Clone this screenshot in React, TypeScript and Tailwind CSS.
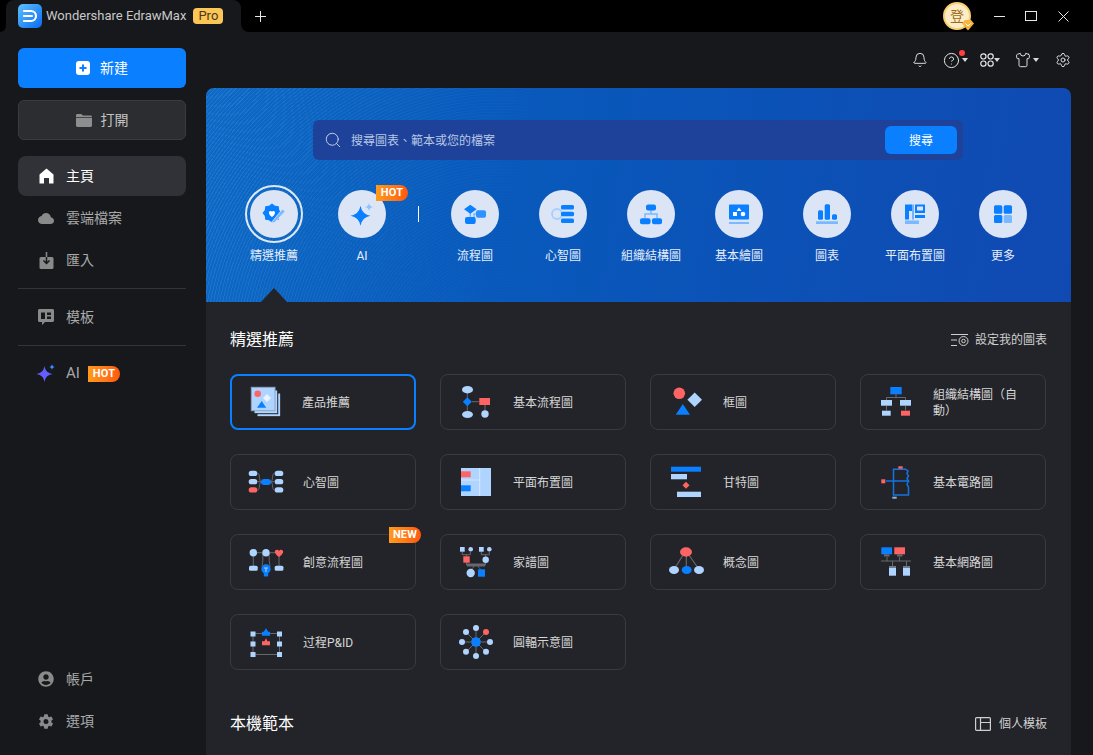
import React from 'react';
import { Bell, CircleHelp, Settings, Shirt, Search } from 'lucide-react';
import { IoCloud, IoSettingsSharp } from 'react-icons/io5';
import { FaUserCircle } from 'react-icons/fa';

const BLUE = '#0a7fff';
const LIGHT = '#afd4ff';
const RED = '#ff6464';
const LINE = '#66686d';

type IconProps = { children: React.ReactNode };

const Icon36: React.FC<IconProps> = ({ children }) => (
  <svg width="36" height="36" viewBox="0 0 36 36" className="shrink-0">{children}</svg>
);

const Icon24: React.FC<IconProps> = ({ children }) => (
  <svg width="24" height="24" viewBox="-12 -12 24 24">{children}</svg>
);

const Caret = () => <span className="border-x-[3px] border-t-[4px] border-x-transparent border-t-[#d8d8d8]" />;

const Tag: React.FC<{ text: string; className: string }> = ({ text, className }) => (
  <span className={`absolute flex h-4 w-8 items-center justify-center rounded-r-full rounded-tl-lg bg-gradient-to-r from-[#ff9a1c] to-[#ff5710] text-[11px] font-bold tracking-[0.2px] text-white ${className}`}>
    {text}
  </span>
);

const categories: { label: string; icon: React.ReactNode }[] = [
  { label: '流程圖', icon: <Icon24><path d="M-4.700-3v7M1 0h-2v6h-4" fill="none" stroke="#7ab8ff" strokeWidth="1.500" /><path d="M-4.700-9.300 1.600-4.800-4.700-.3-11-4.800Z" fill={BLUE} /><rect x="1" y="-3.700" width="10" height="7.400" rx="2" fill="#2f93ff" /><rect x="-10" y="3" width="10.700" height="7" rx="2" fill={BLUE} /></Icon24> },
  { label: '心智圖', icon: <Icon24><circle cx="-6" cy="0" r="5" fill="none" stroke="#a6cfff" strokeWidth="1.800" /><rect x="-2" y="-9" width="13" height="4.500" rx="1.500" fill={BLUE} /><rect x="-2" y="-2.200" width="13" height="4.500" rx="1.500" fill={BLUE} /><rect x="-2" y="4.500" width="13" height="4.500" rx="1.500" fill={BLUE} /></Icon24> },
  { label: '組織結構圖', icon: <Icon24><path d="M0-4v4M-6 4V0H6v4" fill="none" stroke="#7ab8ff" strokeWidth="1.500" /><rect x="-5" y="-9.500" width="10" height="6" rx="2" fill={BLUE} /><rect x="-11" y="4.300" width="10.500" height="6" rx="2" fill={BLUE} /><rect x="1" y="4.300" width="10" height="6" rx="2" fill={BLUE} /></Icon24> },
  { label: '基本繪圖', icon: <Icon24><rect x="-10" y="-9.500" width="20" height="15" rx="1" fill={BLUE} /><rect x="-10" y="8" width="20" height="2" fill="#7ab8ff" /><path d="M0-6.500 2.500-3h-5Z" fill="#fff" /><rect x="-6" y="-2" width="4" height="4" fill="#fff" /><circle cx="4" cy="0" r="2.300" fill="#fff" /></Icon24> },
  { label: '圖表', icon: <Icon24><rect x="-9" y="-3.700" width="5" height="9.400" rx="1.500" fill={BLUE} /><rect x="-2.300" y="-9.700" width="5.300" height="15.400" rx="1.500" fill={BLUE} /><rect x="5" y="0.300" width="5" height="5.400" rx="1.500" fill={BLUE} /><rect x="-11" y="7.300" width="22" height="2.700" fill="#7ab8ff" /></Icon24> },
  { label: '平面布置圖', icon: <Icon24><path d="M-10-9.500H-3V-3H-6V5.500H-10ZM0-9.500H10V-1H0ZM0 1H10V4H0Z" fill={BLUE} /><rect x="-2.500" y="-9.500" width="1" height="15" fill={BLUE} /><rect x="2" y="-7.500" width="6" height="4" fill="#dbe5f6" /><rect x="-10" y="6.500" width="14" height="3.500" fill="#7ab8ff" /></Icon24> },
  { label: '更多', icon: <Icon24><rect x="-9" y="-8.700" width="8.300" height="8.400" rx="1.500" fill={BLUE} /><rect x="0.700" y="-8.700" width="8.300" height="8.400" rx="1.500" fill={BLUE} /><rect x="-9" y="1" width="8.300" height="8" rx="1.500" fill={BLUE} /><rect x="0.700" y="1" width="8.300" height="8" rx="1.500" fill="#7ab8ff" /></Icon24> },
];

const cards: { label: string; icon: React.ReactNode; selected?: boolean; isNew?: boolean }[] = [
  {
    label: '產品推薦', selected: true,
    icon: <Icon36><rect x="9" y="9" width="23.700" height="23.700" fill={LIGHT} stroke="#232429" /><rect x="6" y="6" width="23.700" height="23.700" fill={LIGHT} stroke="#232429" /><rect x="3.300" y="3.300" width="23.700" height="23.400" fill={LIGHT} stroke="#8aa4c2" /><circle cx="9.700" cy="9.700" r="3.300" fill={RED} /><path d="m19 10 4 4-4 4-4-4Z" fill="#eaf4ff" /><path d="m13.700 17 4.500 6.700H9Z" fill={BLUE} /></Icon36>,
  },
  {
    label: '基本流程圖',
    icon: <Icon36><path d="M9.300 9.300V27M14 17.700h7M27 21v6" stroke={LINE} fill="none" /><ellipse cx="9.500" cy="5.700" rx="5.500" ry="3.700" fill={LIGHT} /><path d="M9.300 13.200l4.500 4.500-4.500 4.500-4.500-4.500Z" fill={BLUE} /><rect x="21.300" y="14" width="10.700" height="7" fill={RED} /><ellipse cx="9.500" cy="30.500" rx="5.500" ry="3.500" fill={LIGHT} /><circle cx="27" cy="30" r="3.700" fill={LIGHT} /></Icon36>,
  },
  {
    label: '框圖',
    icon: <Icon36><circle cx="11.300" cy="9.300" r="5.800" fill={RED} /><path d="M26.700 8.400 34 15.700 26.700 23l-7.300-7.300Z" fill={LIGHT} /><path d="M14.800 20 22 30.700H7.700Z" fill={BLUE} /></Icon36>,
  },
  {
    label: '組織結構圖（自動）',
    icon: <Icon36><path d="M18 10v3.500M8.500 16v-2.500h19V16M8.500 22v4.500M27.500 22v4.500" fill="none" stroke={LINE} /><rect x="12.300" y="3" width="11.400" height="7.300" fill={BLUE} /><rect x="3" y="16" width="11" height="5.700" fill={LIGHT} /><rect x="22" y="16" width="11" height="5.700" fill={LIGHT} /><rect x="4" y="26.700" width="8.700" height="5" fill={LIGHT} /><rect x="23" y="26.700" width="9" height="5" fill={RED} /></Icon36>,
  },
  {
    label: '心智圖',
    icon: <Icon36><path d="M9.500 9.300c3 0 1 8.400 4 8.400-3 0-1 8.300-4 8.300M9.500 17.700h4M26.500 9.300c-3 0-1 8.400-4 8.400 3 0 1 8.300 4 8.300M26.500 17.700h-4" fill="none" stroke={LINE} /><rect x="13" y="15" width="10" height="6" rx="3" fill={BLUE} /><rect x="0.700" y="6.700" width="8.600" height="5.300" rx="2.600" fill={LIGHT} /><rect x="0.700" y="15" width="8.600" height="5.300" rx="2.600" fill={LIGHT} /><rect x="0.700" y="23.300" width="8.600" height="5.300" rx="2.600" fill={RED} /><rect x="26.700" y="6.700" width="8.600" height="5.300" rx="2.600" fill={LIGHT} /><rect x="26.700" y="15" width="8.600" height="5.300" rx="2.600" fill={LIGHT} /><rect x="26.700" y="23.300" width="8.600" height="5.300" rx="2.600" fill={LIGHT} /></Icon36>,
  },
  {
    label: '平面布置圖',
    icon: <Icon36><rect x="3" y="4" width="30" height="28" fill={LIGHT} /><path d="M3 16h19M21.700 4v28" stroke="#d5e8ff" fill="none" /><rect x="3" y="7.300" width="9.700" height="6" fill={RED} /><rect x="3" y="21.300" width="9.700" height="6" fill={BLUE} /></Icon36>,
  },
  {
    label: '甘特圖',
    icon: <Icon36><rect x="3" y="2.700" width="30" height="5" fill={BLUE} /><rect x="3" y="10" width="16" height="5.300" fill={LIGHT} /><path d="M18 17.800l3.500 3.500-3.500 3.500-3.500-3.500Z" fill={RED} /><rect x="9" y="27.700" width="24" height="5.300" fill={LIGHT} /></Icon36>,
  },
  {
    label: '基本電路圖',
    icon: <Icon36><path d="M15.500 17V5.200H27.500l2.500 1.800-1 2.500 1.500 2.500-1.500 2.500 1.500 2.500H8M15.500 17V31H30.500V23L29 20.500 30.500 17" fill="none" stroke="#1274e0" strokeWidth="1.500" /><rect x="3.300" y="15.300" width="4" height="4" fill={RED} /><rect x="20.300" y="2.300" width="4.400" height="2.400" fill={RED} /><rect x="14.300" y="32.700" width="4.400" height="2" fill="#8cb4dc" /></Icon36>,
  },
  {
    label: '創意流程圖', isNew: true,
    icon: <Icon36><path d="M5.300 12v10M9 8.700h5M22 8.700h5M31 12v10M14 8.700c2 2 0 14 0 14M22 8.700c-2 2 0 14 0 14" fill="none" stroke={LINE} /><circle cx="5.300" cy="8.700" r="3.700" fill={LIGHT} /><circle cx="18" cy="8.700" r="3.700" fill={LIGHT} /><path d="M31 13c-6-4-4.500-7.300-2-7.300 1 0 1.700.6 2 1.300.3-.7 1-1.300 2-1.300 2.500 0 4 3.300-2 7.300Z" fill={RED} /><rect x="1" y="21.700" width="8.700" height="5" rx="1.500" fill={LIGHT} /><rect x="26.700" y="21.700" width="8.700" height="5" rx="1.500" fill={LIGHT} /><circle cx="18" cy="25" r="4.700" fill={BLUE} /><rect x="15.800" y="28.500" width="4.400" height="4" rx="1" fill={BLUE} /><path d="M16 24h4M18 24v4" stroke={LIGHT} /></Icon36>,
  },
  {
    label: '家譜圖',
    icon: <Icon36><path d="M4.300 7.700v3h8v-3M8.500 10.700v2M23.300 7.700v3h8v-3M27.700 10.700V13M8.500 18.700V21h19v-2.500M16 21c0 4-3 3-3 5M20 21c0 4 3 3 3 5" fill="none" stroke={LINE} /><path d="M9 21h18" stroke={LINE} strokeWidth="3" /><rect x="2" y="3" width="4.700" height="4.700" fill={LIGHT} /><circle cx="12.700" cy="5.300" r="2.300" fill={LIGHT} /><rect x="21" y="3" width="4.700" height="4.700" fill={LIGHT} /><circle cx="31.300" cy="5.300" r="2.300" fill={LIGHT} /><rect x="5.300" y="12.300" width="6.400" height="6.400" fill={RED} /><circle cx="27.700" cy="15.700" r="3.200" fill={LIGHT} /><circle cx="12.700" cy="29" r="4.200" fill={LIGHT} /><rect x="20" y="25.300" width="7" height="7.400" fill={BLUE} /></Icon36>,
  },
  {
    label: '概念圖',
    icon: <Icon36><path d="M15 11 7 24M18.300 11v12M21 11l9 13" stroke={LINE} fill="none" strokeWidth="1.200" /><ellipse cx="18" cy="8" rx="6" ry="4.700" fill={RED} /><ellipse cx="6" cy="26" rx="5" ry="4" fill={LIGHT} /><ellipse cx="18.700" cy="26" rx="5" ry="4" fill={BLUE} /><ellipse cx="31" cy="26" rx="5" ry="4" fill={LIGHT} /></Icon36>,
  },
  {
    label: '基本網路圖',
    icon: <Icon36><path d="M3 17h30M9 13v4M21.500 13v4M14.500 17v5M28.500 17v5" stroke={LINE} fill="none" /><rect x="3.300" y="3.300" width="10.700" height="7" fill={BLUE} /><rect x="6" y="10.300" width="5.500" height="2.200" fill={LINE} /><rect x="16.300" y="3.300" width="10.700" height="7" fill={RED} /><rect x="19" y="10.300" width="5.500" height="2.200" fill={LINE} /><rect x="11" y="22.300" width="7" height="9.400" fill={LIGHT} /><rect x="25" y="22.300" width="7" height="9.400" fill={LIGHT} /><rect x="11" y="22.300" width="7" height="1.500" fill={LINE} /><rect x="25" y="22.300" width="7" height="1.500" fill={LINE} /></Icon36>,
  },
  {
    label: '过程P&ID',
    icon: <Icon36><rect x="5" y="9.500" width="26.500" height="21" fill="none" stroke={LINE} /><path d="M18 4.300l2.200 3.500H22v3.900h-8V7.800h1.800Z" fill={BLUE} /><path d="M18 14.300l1.500 3H22v4h-8v-4h2.500Z" fill={RED} /><g fill={LIGHT}><rect x="2.500" y="7.500" width="5" height="5" /><rect x="29" y="7.500" width="5" height="5" /><rect x="2.500" y="17.500" width="5" height="5" /><rect x="29" y="17.500" width="5" height="5" /><rect x="2.500" y="28" width="5" height="5" /><rect x="29" y="28" width="5" height="5" /></g></Icon36>,
  },
  {
    label: '圓輻示意圖',
    icon: <Icon36><path d="M18 7v22M7 18h22M10 10l16 16M26 10 10 26" stroke={LINE} fill="none" /><circle cx="18" cy="18" r="4.800" fill={BLUE} /><circle cx="18" cy="4" r="3" fill={LIGHT} /><circle cx="28" cy="8" r="3" fill={RED} /><circle cx="32" cy="18" r="3" fill={LIGHT} /><circle cx="28" cy="27.700" r="3" fill={LIGHT} /><circle cx="18" cy="32" r="3" fill={LIGHT} /><circle cx="8" cy="27.700" r="3" fill={LIGHT} /><circle cx="4" cy="18" r="3" fill={LIGHT} /><circle cx="8" cy="8" r="3" fill={LIGHT} /></Icon36>,
  },
];

const NavRow: React.FC<{ icon: React.ReactNode; label: React.ReactNode; active?: boolean }> = ({ icon, label, active }) => (
  <div className={`flex h-10 items-center gap-3 rounded-lg pl-5 text-sm ${active ? 'bg-[#313237] text-white' : 'text-[#a9a9a9]'}`}>
    <span className="flex w-4 shrink-0 items-center justify-center">{icon}</span>
    {label}
  </div>
);

const CategoryItem: React.FC<{ label: string; icon: React.ReactNode; children?: React.ReactNode; selected?: boolean }> = ({ label, icon, children, selected }) => (
  <div className="flex w-[88px] shrink-0 flex-col items-center">
    <div className="relative flex h-12 w-12 items-center justify-center rounded-full bg-[#dbe5f6]">
      {selected && <span className="absolute -inset-[5px] rounded-full border-2 border-white/85" />}
      {icon}
      {children}
    </div>
    <span className="mt-[9px] whitespace-nowrap text-xs leading-[18px] text-[#e6eefb]">{label}</span>
  </div>
);

const App: React.FC = () => {
  return (
    <div className="flex h-screen w-screen flex-col overflow-hidden bg-[#16181c] font-['Roboto','Noto_Sans_CJK_TC',sans-serif]">
      {/* title bar */}
      <div className="flex h-8 shrink-0">
        <div className="w-[6px] rounded-br-lg bg-black" />
        <div className="w-[235px] bg-black">
          <div className="flex h-8 items-center rounded-t-lg bg-[#16181c] pl-3">
            <svg width="24" height="24" viewBox="0 0 24 24" className="shrink-0">
              <defs>
                <linearGradient id="logo" x1="0" y1="0" x2="1" y2="1">
                  <stop offset="0" stopColor="#5cc0ff" />
                  <stop offset="1" stopColor="#0a6cf0" />
                </linearGradient>
              </defs>
              <rect width="24" height="24" rx="5" fill="url(#logo)" />
              <path d="M6 7h7a5 5 0 0 1 0 10H6M6 12h8" fill="none" stroke="#fff" strokeWidth="2.200" strokeLinecap="round" />
            </svg>
            <span className="ml-1 whitespace-nowrap text-[13px] text-[#c8c8c8]">Wondershare EdrawMax</span>
            <span className="ml-[7px] flex h-4 w-[30px] items-center justify-center rounded-[4px] bg-[#fbc558] text-[13px] text-[#4a3a12]">Pro</span>
          </div>
        </div>
        <div className="flex flex-1 items-center rounded-bl-lg bg-black pl-[14px] pr-[14px]">
          <svg width="11" height="11" viewBox="0 0 11 11" className="shrink-0">
            <path d="M5.500 0v11M0 5.500h11" stroke="#e8e8e8" />
          </svg>
          <div className="relative ml-auto mr-3 flex h-7 w-7 items-center justify-center rounded-full border-2 border-[#f8cf70] bg-[#fdedc6] text-sm text-[#9a6a1c]">
            登
            <svg width="12" height="12" viewBox="0 0 12 12" className="absolute -bottom-[3px] -right-[5px]">
              <path d="M3 1h6l3 3.500L6 11.500 0 4.500Z" fill="#f8b53c" />
              <path d="M3.500 4.500 6 7l2.500-2.500" fill="none" stroke="#fff" />
            </svg>
          </div>
          <div className="flex h-8 w-8 items-center justify-center">
            <span className="h-px w-[11px] bg-[#e8e8e8]" />
          </div>
          <div className="flex h-8 w-8 items-center justify-center">
            <span className="h-[10px] w-[12px] border border-[#e8e8e8]" />
          </div>
          <div className="flex h-8 w-8 items-center justify-center">
            <svg width="11" height="11" viewBox="0 0 11 11">
              <path d="M.5.500l10 10M10.500.500l-10 10" stroke="#e8e8e8" />
            </svg>
          </div>
        </div>
      </div>

      <div className="flex min-h-0 flex-1">
        {/* sidebar */}
        <aside className="flex w-[206px] shrink-0 flex-col pb-[14px] pl-[18px] pr-5 pt-4">
          <button className="flex h-10 items-center justify-center gap-[10px] rounded-md bg-[#0a7fff] text-sm text-white">
            <svg width="14" height="14" viewBox="0 0 14 14">
              <rect width="14" height="14" rx="3" fill="#fff" />
              <path d="M7 3.500v7M3.500 7h7" stroke="#0a7fff" strokeWidth="2" />
            </svg>
            新建
          </button>
          <button className="mt-3 flex h-10 items-center justify-center gap-[9px] rounded-md border border-[#3a3b3f] bg-[#2c2d30] text-sm text-[#c4c4c4]">
            <svg width="16" height="13" viewBox="0 0 16 13">
              <path d="M0 1.500C0 .7.600 0 1.400 0h4l1.500 1.500h7.700c.8 0 1.400.6 1.400 1.400H0ZM0 3.800h16v7.800c0 .8-.6 1.400-1.400 1.400H1.400C.6 13 0 12.400 0 11.600Z" fill="#8e8e8e" />
            </svg>
            打開
          </button>

          <nav className="mt-4 flex flex-col gap-[2px]">
            <NavRow
              active
              label="主頁"
              icon={
                <svg width="15" height="16" viewBox="0 0 15 16">
                  <path d="M7.500.500 14.500 6.500V15.500H10V10H5V15.500H.5V6.500Z" fill="#fff" />
                </svg>
              }
            />
            <NavRow label="雲端檔案" icon={<IoCloud size={19} color="#8a8a8a" />} />
            <NavRow
              label="匯入"
              icon={
                <svg width="15" height="17" viewBox="0 0 15 17">
                  <rect x="0.500" y="5" width="14" height="12" rx="1.500" fill="#8a8a8a" />
                  <path d="M7.500 0v11" stroke="#8a8a8a" strokeWidth="1.500" />
                  <path d="M7.500 5v6M4.500 8.500l3 3 3-3" stroke="#16181c" strokeWidth="1.500" fill="none" />
                </svg>
              }
            />
          </nav>
          <div className="my-2 h-px bg-[#333437]" />
          <NavRow
            label="模板"
            icon={
              <svg width="16" height="16" viewBox="0 0 16 16">
                <path d="M1.500 0h13C15.300 0 16 .7 16 1.500v10c0 .8-.7 1.500-1.500 1.500H7l-3 3v-3H1.500C.7 13 0 12.300 0 11.500v-10C0 .7.700 0 1.500 0Z" fill="#8a8a8a" />
                <path d="M3 3.500h4V10H3ZM9 3.500h4V6H9ZM9 7.500h4V10H9Z" fill="#16181c" />
              </svg>
            }
          />
          <div className="my-2 h-px bg-[#333437]" />
          <NavRow
            label={
              <span className="relative flex w-[54px] items-center text-[15px]">
                AI
                <Tag text="HOT" className="left-[22px] top-[3px]" />
              </span>
            }
            icon={
              <svg width="20" height="20" viewBox="0 0 20 20" className="shrink-0">
                <defs>
                  <linearGradient id="aiStar" x1="0" y1="1" x2="1" y2="0">
                    <stop offset="0" stopColor="#7c4dff" />
                    <stop offset="1" stopColor="#4a6dff" />
                  </linearGradient>
                </defs>
                <path d="M8.500 2C9.500 7 11.500 9 16.500 10 11.500 11 9.500 13 8.500 18 7.500 13 5.500 11 .5 10 5.500 9 7.500 7 8.500 2Z" fill="url(#aiStar)" />
                <path d="M16 0c.3 1.800 1.200 2.700 3 3-1.800.3-2.700 1.200-3 3-.3-1.800-1.200-2.700-3-3 1.800-.3 2.700-1.200 3-3Z" fill="#3d8bff" />
              </svg>
            }
          />
          <div className="mt-auto flex flex-col gap-[2px]">
            <NavRow label="帳戶" icon={<FaUserCircle size={16} color="#8a8a8a" />} />
            <NavRow label="選項" icon={<IoSettingsSharp size={17} color="#8a8a8a" />} />
          </div>
        </aside>

        <main className="flex min-w-0 flex-1 flex-col pr-[22px]">
          {/* toolbar */}
          <div className="flex h-14 shrink-0 items-center justify-end text-[#e8e8e8]">
            <Bell size={16} strokeWidth={1.4} />
            <div className="relative ml-[15px] flex items-center gap-[2px]">
              <CircleHelp size={17} strokeWidth={1.4} />
              <span className="absolute -top-[2px] left-[16px] h-[6px] w-[6px] rounded-full bg-[#ff4040]" />
              <Caret />
            </div>
            <div className="ml-3 flex items-center">
              <svg width="14" height="14" viewBox="0 0 14 14" fill="none" stroke="#e8e8e8" strokeWidth="1.200">
                <rect x="0.800" y="0.800" width="5.200" height="5.200" rx="2.400" />
                <rect x="8" y="0.800" width="5.200" height="5.200" rx="2.400" />
                <rect x="0.800" y="8" width="5.200" height="5.200" rx="2.400" />
                <rect x="8" y="8" width="5.200" height="5.200" rx="2.400" />
              </svg>
              <Caret />
            </div>
            <div className="ml-[15px] flex items-center gap-[2px]">
              <Shirt size={16} strokeWidth={1.4} />
              <Caret />
            </div>
            <Settings size={16} strokeWidth={1.4} className="ml-4" />
          </div>

          <div className="min-h-0 flex-1 overflow-hidden rounded-t-lg bg-[#232429]">
            {/* banner */}
            <section className="relative h-[214px] bg-[linear-gradient(100deg,#0d6ac6_0%,#0859bb_35%,#1049b2_100%)] pt-8">
              <div className="pointer-events-none absolute inset-0 bg-[repeating-radial-gradient(circle_at_34%_125%,rgba(255,255,255,0.09)_0_1px,transparent_1px_3px)] [mask-image:linear-gradient(105deg,black,transparent_42%)]" />
              <div className="relative ml-[107px] flex h-10 w-[650px] items-center rounded-md bg-[#1e429a] pl-[11px] pr-[6px]">
                <Search size={18} strokeWidth={1.3} className="text-[#c3cfe8]" />
                <span className="ml-[9px] pt-px text-xs text-[#b9c7e4]">搜尋圖表、範本或您的檔案</span>
                <button className="ml-auto h-7 w-[72px] rounded-md bg-[#0a7fff] pt-px text-xs text-white">搜尋</button>
              </div>

              <div className="relative mt-[30px] flex pl-6">
                <CategoryItem
                  selected
                  label="精選推薦"
                  icon={
                    <Icon24>
                      <path d="M7.500-1 5.200 2 4.700 5.700 1 6.200-2 8.500-5 6.200-8.700 5.700-9.200 2-11.500-1-9.200-4-8.700-7.700-5-8.200-2-10.500 1-8.200 4.700-7.700 5.200-4Z" fill={BLUE} />
                      <path d="M-2 3C-7-.5-5-4.500-2-2.500 1-4.500 3-.5-2 3Z" fill="#fff" />
                      <path d="M8.500-5 11-2.500.5 8.500-3 9Z" fill="#7ab8ff" stroke="#dbe5f6" strokeWidth="0.800" />
                    </Icon24>
                  }
                />
                <CategoryItem
                  label="AI"
                  icon={
                    <Icon24>
                      <path d="M-1.500-8.300Q0 .2 8.500 1.700 0 3.200-1.500 11.700-3 3.200-11.500 1.700-3 .2-1.500-8.300Z" fill={BLUE} />
                      <path d="M7-11C7.400-8.500 8.500-7.500 11-7 8.500-6.500 7.400-5.500 7-3 6.600-5.500 5.500-6.500 3-7 5.500-7.500 6.600-8.500 7-11Z" fill="#8fc2ff" />
                    </Icon24>
                  }
                >
                  <Tag text="HOT" className="-right-[22px] -top-[5px]" />
                </CategoryItem>
                <div className="flex w-[25px] shrink-0 justify-center pt-4">
                  <span className="h-4 w-px bg-white" />
                </div>
                {categories.map((c) => (
                  <CategoryItem key={c.label} label={c.label} icon={c.icon} />
                ))}
              </div>

              <span className="absolute bottom-0 left-[55px] border-x-[13px] border-b-[14px] border-x-transparent border-b-[#232429]" />
            </section>

            {/* recommended */}
            <section className="px-6 pt-[26px]">
              <div className="flex items-center justify-between">
                <h2 className="text-base font-normal text-white">精選推薦</h2>
                <div className="flex items-center gap-[6px] text-xs text-[#d0d0d0]">
                  <svg width="18" height="14" viewBox="0 0 18 14" fill="none" stroke="#cfcfcf">
                    <path d="M0 1.500h17M0 7h6M0 12.500h6" />
                    <circle cx="12.500" cy="8" r="4.500" />
                    <circle cx="12.500" cy="8" r="1.800" />
                  </svg>
                  設定我的圖表
                </div>
              </div>

              <div className="mt-[22px] grid grid-cols-[repeat(4,186px)] gap-6">
                {cards.map((c) => (
                  <div
                    key={c.label}
                    className={`relative flex h-14 items-center rounded-lg text-xs leading-4 text-[#d6d6d6] ${c.selected ? 'gap-[18px] border-2 border-[#0a7fff] pl-[16px]' : 'gap-[19px] border border-[#3a3b3f] pl-[17px]'}`}
                  >
                    {c.icon}
                    <span className="w-[90px] pt-px">{c.label}</span>
                    {c.isNew && <Tag text="NEW" className="-right-[6px] -top-[8px]" />}
                  </div>
                ))}
              </div>

              <div className="mt-[42px] flex items-center justify-between">
                <h2 className="text-base font-normal text-white">本機範本</h2>
                <div className="flex items-center gap-2 text-xs text-[#d0d0d0]">
                  <svg width="16" height="14" viewBox="0 0 16 14" fill="none" stroke="#cfcfcf" strokeWidth="1.200">
                    <rect x="0.600" y="0.600" width="14.800" height="12.800" rx="1" />
                    <path d="M5.500.600v12.800M5.500 5.500h10" />
                  </svg>
                  個人模板
                </div>
              </div>
            </section>
          </div>
        </main>
      </div>
    </div>
  );
};

export default App;
